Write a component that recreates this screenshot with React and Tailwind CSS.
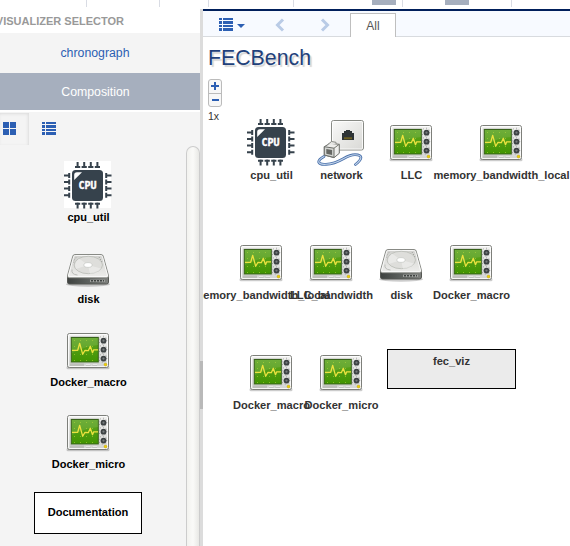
const KNOBS = [14.7, 23.7, 32.6];

function MonitorIcon() {
  return (
    <svg width="48" height="48" viewBox="0 0 48 48" className="shrink-0">
      <defs>
        <linearGradient id="scr" x1="0" y1="0" x2="0" y2="1">
          <stop offset="0" stopColor="#5fa524" />
          <stop offset="1" stopColor="#419400" />
        </linearGradient>
        <linearGradient id="case" x1="0" y1="0" x2="0" y2="1">
          <stop offset="0" stopColor="#f2f2f0" />
          <stop offset="1" stopColor="#d3d5d2" />
        </linearGradient>
      </defs>
      <rect x="2.5" y="40" width="43" height="3.2" rx="1.5" fill="#000" opacity=".2" />
      <rect x="3.5" y="7.5" width="41" height="34" rx="2" fill="url(#case)" stroke="#7d7f7a" />
      <rect x="4.5" y="8.5" width="39" height="32" rx="1" fill="none" stroke="#fff" opacity=".8" />
      <rect x="6.3" y="10.5" width="29" height="26.5" rx="1" fill="#f0f1ee" stroke="#b5b7b2" strokeWidth=".5" />
      <rect x="7.3" y="11.5" width="27" height="24.5" fill="url(#scr)" stroke="#37611a" />
      <path d="M8 12h26v7Q22 20 8 27z" fill="#fff" opacity=".1" />
      <path d="M10 14.5h24M10 20.5h24M10 28.5h24M10 34.5h24" stroke="#b5d63f" strokeWidth="1" strokeDasharray="1 5" opacity=".6" />
      <path d="M8 24.3h5.7l2-7 3 11 2.3-4 3.3.4 2-4.4 2.2 6.4 1.2-2.9h4.3" fill="none" stroke="#ece23f" strokeWidth="1.3" strokeLinejoin="round" />
      {KNOBS.map((y) => (
        <g key={y}>
          <circle cx="38.8" cy={y - 0.5} r="4" fill="none" stroke="#555" strokeWidth="1" strokeDasharray="1 2.1" opacity=".5" />
          <circle cx="39.5" cy={y} r="2.9" fill="#3d4243" />
          <circle cx="39.5" cy={y} r="1.1" fill="#777d7e" />
        </g>
      ))}
      <path d="M6.5 38.8h14" stroke="#a6a8a3" strokeWidth="2.6" strokeDasharray="1 1" />
      <path d="M22 39h4.5M28.5 39h4.5" stroke="#aaaca8" strokeWidth="2" />
      <path d="M22 38.8h4.5M28.5 38.8h4.5" stroke="#fff" strokeWidth="1" />
      <circle cx="41.5" cy="38.6" r="1.4" fill="#edd400" stroke="#c49a00" strokeWidth=".5" />
    </svg>
  );
}

function CpuIcon() {
  return (
    <svg width="48" height="48" viewBox="0 0 48 48" className="shrink-0">
      <path d="M0 0h47v47H0z" fill="#fff" />
      <g fill="none" stroke="#36424c" strokeWidth="2">
        {[13.6, 20.2, 26.8, 33.4].map((x) => (
          <path key={x} d={`M${x} 1v6M${x - 2.6} 6h5.2M${x} 41.5v6M${x - 2.6} 42.8h5.2`} />
        ))}
        {[14.4, 20.9, 27.5, 34.2].map((y) => (
          <path key={y} d={`M0 ${y}h6M5.2 ${y - 2.5}v5M41.5 ${y}h6M42.2 ${y - 2.5}v5`} />
        ))}
      </g>
      <rect x="8" y="9" width="31" height="31" rx="3.5" fill="#36424c" />
      <path d="M10.2 19v-5q0-2.8 2.8-2.8h5z" fill="#fff" />
      <text x="23.5" y="28" textAnchor="middle" fill="#fff" stroke="#fff" strokeWidth=".4" fontSize="10" fontWeight="700" fontFamily="DejaVu Sans Mono, monospace">CPU</text>
    </svg>
  );
}

function DiskIcon() {
  return (
    <svg width="48" height="48" viewBox="0 0 48 48" className="shrink-0">
      <defs>
        <linearGradient id="lid" x1="0" y1="0" x2="0" y2="1">
          <stop offset="0" stopColor="#d0d0cd" />
          <stop offset="1" stopColor="#eeeeec" />
        </linearGradient>
        <linearGradient id="front" x1="0" y1="0" x2="1" y2="0">
          <stop offset="0" stopColor="#3e4240" />
          <stop offset=".5" stopColor="#5c605d" />
          <stop offset="1" stopColor="#7f817e" />
        </linearGradient>
      </defs>
      <ellipse cx="24" cy="41.3" rx="22" ry="2.4" fill="#000" opacity=".2" />
      <path d="M3.5 32.5h41v6.5q0 2-2 2h-37q-2 0-2-2z" fill="url(#front)" stroke="#555753" />
      <path d="M10.8 11.5h26.4q1.5 0 2 1.6L44.5 32.5q.3 2.2-1.6 2.2H5.1q-1.9 0-1.6-2.2l5.3-19.4q.5-1.6 2-1.6z" fill="url(#lid)" stroke="#888a85" />
      <path d="M11.4 12.5h25.2q1.4 0 1.9 1.4L43.4 32q.2 1.7-1 1.7H5.6q-1.2 0-1-1.7l5-18.1q.4-1.4 1.8-1.4z" fill="none" stroke="#fff" opacity=".8" />
      <ellipse cx="24.3" cy="22" rx="14.2" ry="8.7" fill="#dededb" stroke="#bdbfba" strokeWidth=".9" />
      <path d="M15 15.5l9 6.5 13 3.5q-3 5-11 5.5L24 22 12 26q-3-5 3-10.5z" fill="#fff" opacity=".35" />
      <ellipse cx="24" cy="22" rx="4.2" ry="2.4" fill="#fff" stroke="#c8cac6" strokeWidth=".8" />
      <path d="M8 26.5q-1 5 5.5 5.5" fill="none" stroke="#babcb8" />
      <path d="M12 14.5q-2 2-2.3 5M35 14l3 5" stroke="#999b97" fill="none" strokeDasharray="1 1.4" />
      <path d="M26 37.8h15" stroke="#9fa19e" strokeWidth="2.4" />
      <path d="M27 37.8h13" stroke="#3f4341" strokeWidth="1.4" strokeDasharray="2 1" />
    </svg>
  );
}

function NetworkIcon() {
  return (
    <svg width="48" height="48" viewBox="0 0 48 48" className="shrink-0">
      <defs>
        <linearGradient id="plate" x1="0" y1="0" x2="1" y2="1">
          <stop offset="0" stopColor="#fafaf9" />
          <stop offset="1" stopColor="#d8d8d5" />
        </linearGradient>
      </defs>
      <rect x="14.5" y="2.5" width="32" height="29.5" rx="2" fill="url(#plate)" stroke="#888a85" />
      <rect x="15.5" y="3.5" width="30" height="27.5" rx="1" fill="none" stroke="#fff" opacity=".8" />
      <path d="M25 22v-7h2v-2h2v-1h4v1h2v2h2v7z" fill="#2e3436" />
      <path d="M27.5 20.2h8" stroke="#a98b10" strokeWidth="2" strokeDasharray="1 1" />
      <g fill="none" strokeLinecap="round">
        <path d="M7 38.5C-1 43 .5 46.8 9 46.3C24 45.5 28 36.7 38 36.7C47 36.7 44.5 42 38.5 46.5" stroke="#4a71ab" strokeWidth="2.8" />
        <path d="M7 38.5C-1 43 .5 46.8 9 46.3C24 45.5 28 36.7 38 36.7C47 36.7 44.5 42 38.5 46.5" stroke="#c3d4ea" strokeWidth="1.1" />
      </g>
      <path d="M7.3 28.7L13 25.3l9.3 1V35.3L17 39.7 7.3 37z" fill="#eeeeec" stroke="#6b6d69" />
      <path d="M7.3 28.7l9.7 1.5v9.2L7.3 37z" fill="#d3d5d2" stroke="#6b6d69" />
      <path d="M9.3 31l5.8.9v5L9.3 35.7z" fill="#666864" />
      <path d="M17 30.2l5.3-3.9" stroke="#777973" fill="none" />
      <path d="M10.5 26.7l4-3.2 4.5.8v1.5" stroke="#888a85" fill="#e5e5e3" />
    </svg>
  );
}

const ICONS = { cpu: CpuIcon, monitor: MonitorIcon, disk: DiskIcon, network: NetworkIcon };

function ListIcon() {
  return (
    <svg width="14" height="13" viewBox="0 0 14 13" shapeRendering="crispEdges" className="shrink-0" fill="#2c5fb3">
      {[0, 3, 7, 10].map((y) => (
        <g key={y}>
          <rect x="0" y={y} width="3" height={y === 3 || y === 10 ? 3 : 2} />
          <rect x="4" y={y} width="10" height={y === 3 || y === 10 ? 3 : 2} />
        </g>
      ))}
    </svg>
  );
}

function Chevron({ flip }) {
  return (
    <svg width="10" height="14" viewBox="0 0 10 14" className={flip ? "rotate-180" : ""}>
      <path d="M8 1.5L2.5 7 8 12.5" fill="none" stroke="#b9cbe6" strokeWidth="3" />
    </svg>
  );
}

const SIDEBAR = [
  ["cpu", "cpu_util"],
  ["disk", "disk"],
  ["monitor", "Docker_macro"],
  ["monitor", "Docker_micro"],
];

// Canvas positions: horizontal centre and top of each node.
const NODES = [
  ["cpu", "cpu_util", 68, 81],
  ["network", "network", 138, 81],
  ["monitor", "LLC", 208, 81],
  ["monitor", "memory_bandwidth_local", 298, 81],
  ["monitor", "memory_bandwidth_local", 58, 201],
  ["monitor", "LLC_bandwidth", 128, 201],
  ["disk", "disk", 198, 201],
  ["monitor", "Docker_macro", 268, 201],
  ["monitor", "Docker_macro", 68, 311],
  ["monitor", "Docker_micro", 138, 311],
];

function Sidebar() {
  return (
    <aside className="flex w-[200px] flex-col bg-[#f4f4f4]">
      <div className="flex h-6 shrink-0 bg-white">
        <h2 className="flex w-[124px] items-center justify-end whitespace-nowrap text-[11px] font-bold text-[#999]">
          VISUALIZER SELECTOR
        </h2>
      </div>
      <div className="flex h-10 shrink-0 items-center justify-center pr-[10px] text-[12.3px] text-[#2c5fb3]">chronograph</div>
      <div className="flex h-[37px] shrink-0 items-center justify-center bg-[#a6afbe] pr-[9px] pt-px text-[12.3px] text-white">Composition</div>
      <div className="h-0.5 shrink-0 bg-white" />
      <div className="mt-px flex h-8 shrink-0">
        <div className="flex w-[29px] items-center bg-[#f4f4f4] pb-[2px] pl-[3px] shadow-[inset_-1px_1px_3px_#dcdcdc]">
          <svg width="13" height="13" shapeRendering="crispEdges" fill="#2c5fb3">
            <path d="M0 0h6v6H0zM7 0h6v6H7zM0 7h6v6H0zM7 7h6v6H7z" />
          </svg>
        </div>
        <div className="flex items-center pb-[2px] pl-[13px]"><ListIcon /></div>
      </div>
      <div className="flex min-h-0 flex-1 pt-px">
        <div className="flex w-[176px] flex-col items-center pt-[15px]">
          {SIDEBAR.map(([icon, label]) => {
            const Icon = ICONS[icon];
            return (
              <div key={label} className="flex h-[82.4px] shrink-0 flex-col items-center text-[11px] font-bold leading-[16px] text-black">
                <Icon />
                <span className="pl-px">{label}</span>
              </div>
            );
          })}
          <div className="mt-[1.4px] flex h-[42px] w-[108px] shrink-0 items-center justify-center border border-black bg-white pb-0.5 text-[11.1px] font-bold text-black">
            Documentation
          </div>
        </div>
        <div className="ml-[10px] w-[14px] rounded-t-[7px] border border-b-0 border-[#ccc] bg-linear-to-r from-[#f2f2ef] via-[#fafaf8] to-[#e8e8e5]" />
      </div>
    </aside>
  );
}

function Canvas() {
  return (
    <main className="relative flex-1 overflow-hidden bg-white pl-[5px] pt-[6px]">
      <h1 className="h-[30px] text-[21.3px] leading-[30px] text-[#21407a] [text-shadow:2px_2px_1px_#d5d5d5]">FECBench</h1>
      <div className="mt-[6px] flex h-7 w-[14px] flex-col rounded-[3px] border border-[#bbb] bg-[#f7f7f7]">
        <div className="flex flex-1 items-center justify-center border-b border-[#bbb]">
          <svg width="8" height="8"><path d="M0 4h8M4 0v8" stroke="#2c5fb3" strokeWidth="2" /></svg>
        </div>
        <div className="flex flex-1 items-center justify-center">
          <svg width="8" height="8"><path d="M1 4h7" stroke="#2c5fb3" strokeWidth="2" /></svg>
        </div>
      </div>
      <div className="mt-[2px] text-[10.5px] leading-[14px] text-[#333]">1x</div>
      {NODES.map(([icon, label, x, y]) => {
        const Icon = ICONS[icon];
        return (
          <div key={`${x}-${y}`} className="absolute flex w-[200px] -translate-x-1/2 flex-col items-center text-[11.1px] font-bold leading-[18px] text-[#333]" style={{ left: x, top: y }}>
            <Icon />
            <span className="whitespace-nowrap pl-px">{label}</span>
          </div>
        );
      })}
      <div className="absolute left-[184px] top-[312px] flex h-10 w-[129px] justify-center border border-black bg-[#ebebeb] pt-[2px] text-[11.1px] font-bold leading-[18px] text-[#333]">fec_viz</div>
    </main>
  );
}

export default function App() {
  return (
    <div className="flex h-[546px] w-[570px] flex-col overflow-hidden bg-white font-['Liberation_Sans',Arial,sans-serif]">
      <div className="flex h-[9px] shrink-0 items-start">
        <i className="ml-[86px] h-[7px] w-px bg-[#d9dce4]" />
        <i className="ml-[72px] h-[7px] w-px bg-[#d9dce4]" />
        <i className="ml-[48px] h-[7px] w-px bg-[#d9dce4]" />
        <i className="ml-[84px] h-[7px] w-px bg-[#d9dce4]" />
        <i className="ml-[78px] h-[5px] w-6 bg-[#a6afbe]" />
        <i className="ml-[6px] h-[7px] w-px bg-[#d9dce4]" />
        <i className="ml-[42px] h-[5px] w-6 bg-[#a6afbe]" />
        <i className="ml-[42px] h-[7px] w-px bg-[#d9dce4]" />
      </div>
      <div className="flex min-h-0 flex-1">
        <Sidebar />
        <div className="w-[3px] shrink-0 bg-[#dcdcdc] pt-[352px]"><div className="h-12 bg-[#b9b9b9]" /></div>
        <div className="flex min-w-0 flex-1 flex-col">
          <div className="flex h-7 shrink-0 border-t-2 border-[#001f5b] bg-[#f7faff]">
            <div className="flex w-[147px] items-center border-b border-[#d8dbdf] pl-4 pt-[2px]">
              <ListIcon />
              <svg width="8" height="4" className="ml-1 mt-[2px]"><path d="M0 0h8L4 4z" fill="#2c5fb3" /></svg>
              <div className="ml-[30px]"><Chevron /></div>
              <div className="ml-[35px]"><Chevron flip /></div>
            </div>
            <div className="mt-0.5 flex w-[46px] items-center justify-center border border-b-0 border-[#bfbfbf] bg-white text-[12px] text-[#555]">All</div>
            <div className="flex-1 border-b border-[#d8dbdf]" />
          </div>
          <Canvas />
        </div>
      </div>
    </div>
  );
}
